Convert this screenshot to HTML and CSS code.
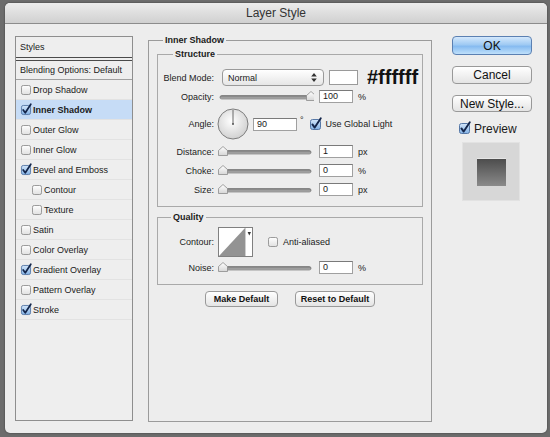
FILE: index.html
```html
<!DOCTYPE html>
<html>
<head>
<meta charset="utf-8">
<title>Layer Style</title>
<link rel="stylesheet" href="styles.css">
</head>
<body>
<svg class="defs" width="0" height="0" aria-hidden="true">
  <defs>
    <linearGradient id="gTrack" x1="0" y1="0" x2="0" y2="1"><stop offset="0" stop-color="#767676"/><stop offset="1" stop-color="#bcbcbc"/></linearGradient>
    <linearGradient id="gThumb" x1="0" y1="0" x2="0" y2="1"><stop offset="0" stop-color="#ffffff"/><stop offset="1" stop-color="#d6d6d6"/></linearGradient>
    <linearGradient id="gBoxOff" x1="0" y1="0" x2="0" y2="1"><stop offset="0" stop-color="#ffffff"/><stop offset="1" stop-color="#e0e0e0"/></linearGradient>
    <linearGradient id="gBoxOn" x1="0" y1="0" x2="0" y2="1"><stop offset="0" stop-color="#d3e6fa"/><stop offset="1" stop-color="#82b1e5"/></linearGradient>
    <radialGradient id="gDial" cx=".45" cy=".4" r=".65"><stop offset="0" stop-color="#ffffff"/><stop offset="1" stop-color="#cdcdcd"/></radialGradient>
    <symbol id="cbOff" viewBox="0 0 11 11"><rect x=".5" y=".5" width="10" height="10" rx="2" fill="url(#gBoxOff)" stroke="#8e8e8e"/></symbol>
    <symbol id="cbOn" viewBox="0 0 11 11" overflow="visible"><rect x=".5" y=".5" width="10" height="10" rx="2" fill="url(#gBoxOn)" stroke="#5577a6"/><path d="M2.4 5.4 L4.7 8.6 L10.8 -0.8" fill="none" stroke="#13254a" stroke-width="1.9" stroke-linecap="round" stroke-linejoin="round"/></symbol>
  </defs>
</svg>
<div class="window">
  <div class="titlebar">Layer Style</div>
  <div class="content">
    <div class="styles-list">
      <div class="list-head">Styles</div>
      <div class="list-blend">Blending Options: Default</div>
      <div class="list-row"><svg class="cb" viewBox="0 0 11 11"><use href="#cbOff"/></svg><span>Drop Shadow</span></div>
      <div class="list-row sel"><svg class="cb" viewBox="0 0 11 11"><use href="#cbOn"/></svg><span>Inner Shadow</span></div>
      <div class="list-row"><svg class="cb" viewBox="0 0 11 11"><use href="#cbOff"/></svg><span>Outer Glow</span></div>
      <div class="list-row"><svg class="cb" viewBox="0 0 11 11"><use href="#cbOff"/></svg><span>Inner Glow</span></div>
      <div class="list-row"><svg class="cb" viewBox="0 0 11 11"><use href="#cbOn"/></svg><span>Bevel and Emboss</span></div>
      <div class="list-row indent"><svg class="cb" viewBox="0 0 11 11"><use href="#cbOff"/></svg><span>Contour</span></div>
      <div class="list-row indent"><svg class="cb" viewBox="0 0 11 11"><use href="#cbOff"/></svg><span>Texture</span></div>
      <div class="list-row"><svg class="cb" viewBox="0 0 11 11"><use href="#cbOff"/></svg><span>Satin</span></div>
      <div class="list-row"><svg class="cb" viewBox="0 0 11 11"><use href="#cbOff"/></svg><span>Color Overlay</span></div>
      <div class="list-row"><svg class="cb" viewBox="0 0 11 11"><use href="#cbOn"/></svg><span>Gradient Overlay</span></div>
      <div class="list-row"><svg class="cb" viewBox="0 0 11 11"><use href="#cbOff"/></svg><span>Pattern Overlay</span></div>
      <div class="list-row"><svg class="cb" viewBox="0 0 11 11"><use href="#cbOn"/></svg><span>Stroke</span></div>
    </div>

    <fieldset class="group main">
      <legend>Inner Shadow</legend>
      <fieldset class="group structure">
        <legend>Structure</legend>
        <div class="row r-blend">
          <span class="lbl">Blend Mode:</span>
          <div class="select"><span>Normal</span><svg width="6" height="9" viewBox="0 0 6 9"><path d="M3 0 L5.8 3.4 H0.2 Z M0.2 5.6 H5.8 L3 9 Z" fill="#333"/></svg></div>
          <div class="swatch"></div>
          <span class="hex">#ffffff</span>
        </div>
        <div class="row r-op">
          <span class="lbl">Opacity:</span>
          <svg class="slider" width="96" height="13" viewBox="0 0 96 13"><rect x="2" y="5.5" width="91" height="3.5" rx="1.75" fill="url(#gTrack)" stroke="#6a6a6a" stroke-width=".6"/><path d="M-4.5 10.5 V5.5 L0 1.5 L4.5 5.5 V10.5 Z" transform="translate(93 0)" fill="url(#gThumb)" stroke="#8c8c8c" stroke-width=".8"/></svg>
          <div class="field">100</div>
          <span class="unit">%</span>
        </div>
        <div class="row r-angle">
          <span class="lbl">Angle:</span>
          <svg class="dial" width="32" height="32" viewBox="0 0 32 32"><circle cx="16" cy="16" r="15" fill="url(#gDial)" stroke="#7c7c7c"/><line x1="16" y1="16" x2="16" y2="2" stroke="#5a5a5a" stroke-width=".9"/><circle cx="16" cy="16" r="1" fill="#555"/></svg>
          <div class="field wide">90</div>
          <span class="deg">°</span>
          <svg class="cb cb-angle" viewBox="0 0 11 11"><use href="#cbOn"/></svg>
          <span class="cb-text">Use Global Light</span>
        </div>
        <div class="row r-dist">
          <span class="lbl">Distance:</span>
          <svg class="slider" width="96" height="13" viewBox="0 0 96 13"><rect x="2" y="5.5" width="91" height="3.5" rx="1.75" fill="url(#gTrack)" stroke="#6a6a6a" stroke-width=".6"/><path d="M-4.5 10.5 V5.5 L0 1.5 L4.5 5.5 V10.5 Z" transform="translate(5 0)" fill="url(#gThumb)" stroke="#8c8c8c" stroke-width=".8"/></svg>
          <div class="field">1</div>
          <span class="unit">px</span>
        </div>
        <div class="row r-choke">
          <span class="lbl">Choke:</span>
          <svg class="slider" width="96" height="13" viewBox="0 0 96 13"><rect x="2" y="5.5" width="91" height="3.5" rx="1.75" fill="url(#gTrack)" stroke="#6a6a6a" stroke-width=".6"/><path d="M-4.5 10.5 V5.5 L0 1.5 L4.5 5.5 V10.5 Z" transform="translate(5 0)" fill="url(#gThumb)" stroke="#8c8c8c" stroke-width=".8"/></svg>
          <div class="field">0</div>
          <span class="unit">%</span>
        </div>
        <div class="row r-size">
          <span class="lbl">Size:</span>
          <svg class="slider" width="96" height="13" viewBox="0 0 96 13"><rect x="2" y="5.5" width="91" height="3.5" rx="1.75" fill="url(#gTrack)" stroke="#6a6a6a" stroke-width=".6"/><path d="M-4.5 10.5 V5.5 L0 1.5 L4.5 5.5 V10.5 Z" transform="translate(5 0)" fill="url(#gThumb)" stroke="#8c8c8c" stroke-width=".8"/></svg>
          <div class="field">0</div>
          <span class="unit">px</span>
        </div>
      </fieldset>

      <fieldset class="group quality">
        <legend>Quality</legend>
        <div class="row r-contour">
          <span class="lbl">Contour:</span>
          <svg class="contour" width="35" height="30" viewBox="0 0 35 30"><rect x=".5" y=".5" width="34" height="29" fill="#fff" stroke="#808080"/><path d="M1 29 L27 1 V29 Z" fill="#939393"/><line x1="27.5" y1="1" x2="27.5" y2="29" stroke="#cfcfcf"/><path d="M29.6 5 H33 L31.3 8.6 Z" fill="#333"/></svg>
          <svg class="cb cb-aa" viewBox="0 0 11 11"><use href="#cbOff"/></svg>
          <span class="cb-text">Anti-aliased</span>
        </div>
        <div class="row r-noise">
          <span class="lbl">Noise:</span>
          <svg class="slider" width="96" height="13" viewBox="0 0 96 13"><rect x="2" y="5.5" width="91" height="3.5" rx="1.75" fill="url(#gTrack)" stroke="#6a6a6a" stroke-width=".6"/><path d="M-4.5 10.5 V5.5 L0 1.5 L4.5 5.5 V10.5 Z" transform="translate(5 0)" fill="url(#gThumb)" stroke="#8c8c8c" stroke-width=".8"/></svg>
          <div class="field">0</div>
          <span class="unit">%</span>
        </div>
      </fieldset>

      <div class="btn-row">
        <div class="btn small b-make">Make Default</div>
        <div class="btn small b-reset">Reset to Default</div>
      </div>
    </fieldset>

    <div class="side">
      <div class="btn big ok">OK</div>
      <div class="btn big cancel">Cancel</div>
      <div class="btn big newstyle">New Style...</div>
      <div class="preview-check"><svg class="cb cb-prev" viewBox="0 0 11 11"><use href="#cbOn"/></svg><span>Preview</span></div>
      <div class="preview-box"><div class="preview-inner"></div></div>
    </div>
  </div>
</div>
</body>
</html>
```

FILE: styles.css
```css
* { box-sizing: border-box; }

html, body {
  margin: 0;
  width: 550px;
  height: 437px;
  overflow: hidden;
}

body {
  background: #6c6c6c;
  padding: 3px 0 0 5px;
  font-family: "Liberation Sans", Arial, sans-serif;
  font-size: 9px;
  color: #1a1a1a;
}

.defs { display: block; width: 0; height: 0; overflow: hidden; }

.window {
  width: 542px;
  height: 430px;
  background: #ededed;
  border-radius: 5px;
  overflow: hidden;
  display: flex;
  flex-direction: column;
  box-shadow: 0 0 2px rgba(0, 0, 0, .5);
}

.titlebar {
  height: 21px;
  flex: none;
  background: linear-gradient(#ececec, #d0d0d0);
  border-bottom: 1px solid #8c8c8c;
  text-align: center;
  font-size: 12px;
  line-height: 20px;
  color: #333;
}

.content {
  display: flex;
  align-items: flex-start;
  padding-left: 10px;
}

/* left styles list */
.styles-list {
  margin-top: 12px;
  width: 118px;
  height: 385px;
  border: 1px solid #8e8e8e;
  background: #eeeeee;
  flex: none;
}

.list-head {
  height: 21px;
  line-height: 20px;
  padding-left: 4px;
  border-bottom: 1px solid #4a4a4a;
}

.list-blend {
  margin-top: 2px;
  height: 20px;
  line-height: 18px;
  padding-left: 4px;
  border-top: 1px solid #4a4a4a;
  border-bottom: 1px solid #a0a0a0;
}

.list-row {
  height: 20px;
  border-bottom: 1px solid #e2e2e2;
  display: flex;
  align-items: center;
  padding-left: 5px;
  gap: 2px;
}

.list-row.indent { padding-left: 16px; }

.list-row.sel {
  background: #c6dcf6;
  font-weight: bold;
}

.cb {
  width: 10px;
  height: 10px;
  flex: none;
  overflow: visible;
}

/* fieldsets */
.group {
  border: 1px solid #9b9b9b;
  margin: 0;
  min-width: 0;
}

legend {
  font-weight: bold;
  font-size: 9px;
  line-height: 12px;
  padding: 0 2px;
}

.main {
  margin: 10px 0 0 15px;
  width: 284px;
  height: 388px;
  padding: 0 8px;
  flex: none;
}

.main > legend { margin-left: 6px; }

.structure {
  margin-top: 2px;
  padding: 0 0 10px 0;
  border-color: #a9a9a9;
}

.structure > legend { margin-left: 15px; }

.quality {
  margin-top: 4px;
  padding: 0 0 10px 0;
  border-color: #a9a9a9;
}

.quality > legend { margin-left: 13px; }

.row {
  display: flex;
  align-items: center;
  height: 13px;
}

.lbl {
  width: 56px;
  margin-right: 4px;
  text-align: right;
  flex: none;
  color: #222;
}

.r-blend { height: 17px; margin-top: 9px; }
.r-op { margin-top: 4px; }
.r-angle { height: 32px; margin-top: 5px; }
.r-dist { margin-top: 5px; }
.r-choke { margin-top: 6px; }
.r-size { margin-top: 6px; }
.r-contour { height: 30px; margin-top: 4px; }
.r-noise { margin-top: 4px; }

.select {
  margin-left: 4px;
  width: 102px;
  height: 17px;
  border: 1px solid #9a9a9a;
  border-radius: 4px;
  background: linear-gradient(#ffffff, #e6e6e6);
  display: flex;
  align-items: center;
  justify-content: space-between;
  padding: 0 6px 0 5px;
  font-size: 9px;
}

.swatch {
  margin-left: 5px;
  width: 29px;
  height: 15px;
  background: #fff;
  border: 1px solid #9a9a9a;
}

.hex {
  margin-left: 9px;
  font-size: 20px;
  font-weight: bold;
  line-height: 17px;
  color: #111;
}

.slider { flex: none; display: block; }

.field {
  margin-left: 5px;
  width: 34px;
  height: 13px;
  background: #fff;
  border: 1px solid #a0a0a0;
  border-top-color: #7a7a7a;
  padding-left: 3px;
  line-height: 11px;
  font-size: 9px;
  flex: none;
}

.field.wide { margin-left: 4px; width: 44px; }

.unit { margin-left: 5px; }

.dial { margin-left: -1px; flex: none; display: block; }

.deg { margin-left: 3px; margin-bottom: 8px; font-size: 9px; }

.cb-angle { margin-left: 6px; width: 11px; height: 11px; }

.cb-text { margin-left: 5px; }

.contour { display: block; flex: none; }

.cb-aa { margin-left: 15px; }

/* buttons */
.btn {
  display: flex;
  align-items: center;
  justify-content: center;
  border: 1px solid #999;
  border-radius: 4px;
  background: linear-gradient(#ffffff, #e4e4e4);
  color: #111;
}

.btn-row {
  margin-top: 6px;
  display: flex;
  justify-content: center;
  gap: 17px;
}

.btn.small {
  height: 16px;
  font-size: 9px;
  font-weight: bold;
}

.b-make { width: 73px; }
.b-reset { width: 80px; }

.side {
  margin: 12px 0 0 20px;
  width: 80px;
  flex: none;
}

.btn.big { font-size: 12px; }

.ok {
  height: 19px;
  border-color: #5b80b2;
  background: linear-gradient(#d4e8fc 0%, #9fcaf3 45%, #86bbf0 55%, #bfe0fb 100%);
}

.cancel { margin-top: 11px; height: 18px; }
.newstyle { margin-top: 11px; height: 17px; }

.preview-check {
  margin-top: 11px;
  height: 11px;
  display: flex;
  align-items: center;
  padding-left: 7px;
  font-size: 12px;
}

.cb-prev { width: 11px; height: 11px; margin-right: 4px; }

.preview-box {
  margin: 8px 0 0 10px;
  width: 58px;
  height: 59px;
  background: #d7d7d7;
  border: 1px solid #e2e2e2;
  padding: 15px 0 0 14px;
}

.preview-inner {
  width: 29px;
  height: 28px;
  background: linear-gradient(#4d4d4d, #8a8a8a);
  border-top: 1px solid #e6e6e6;
}
```
